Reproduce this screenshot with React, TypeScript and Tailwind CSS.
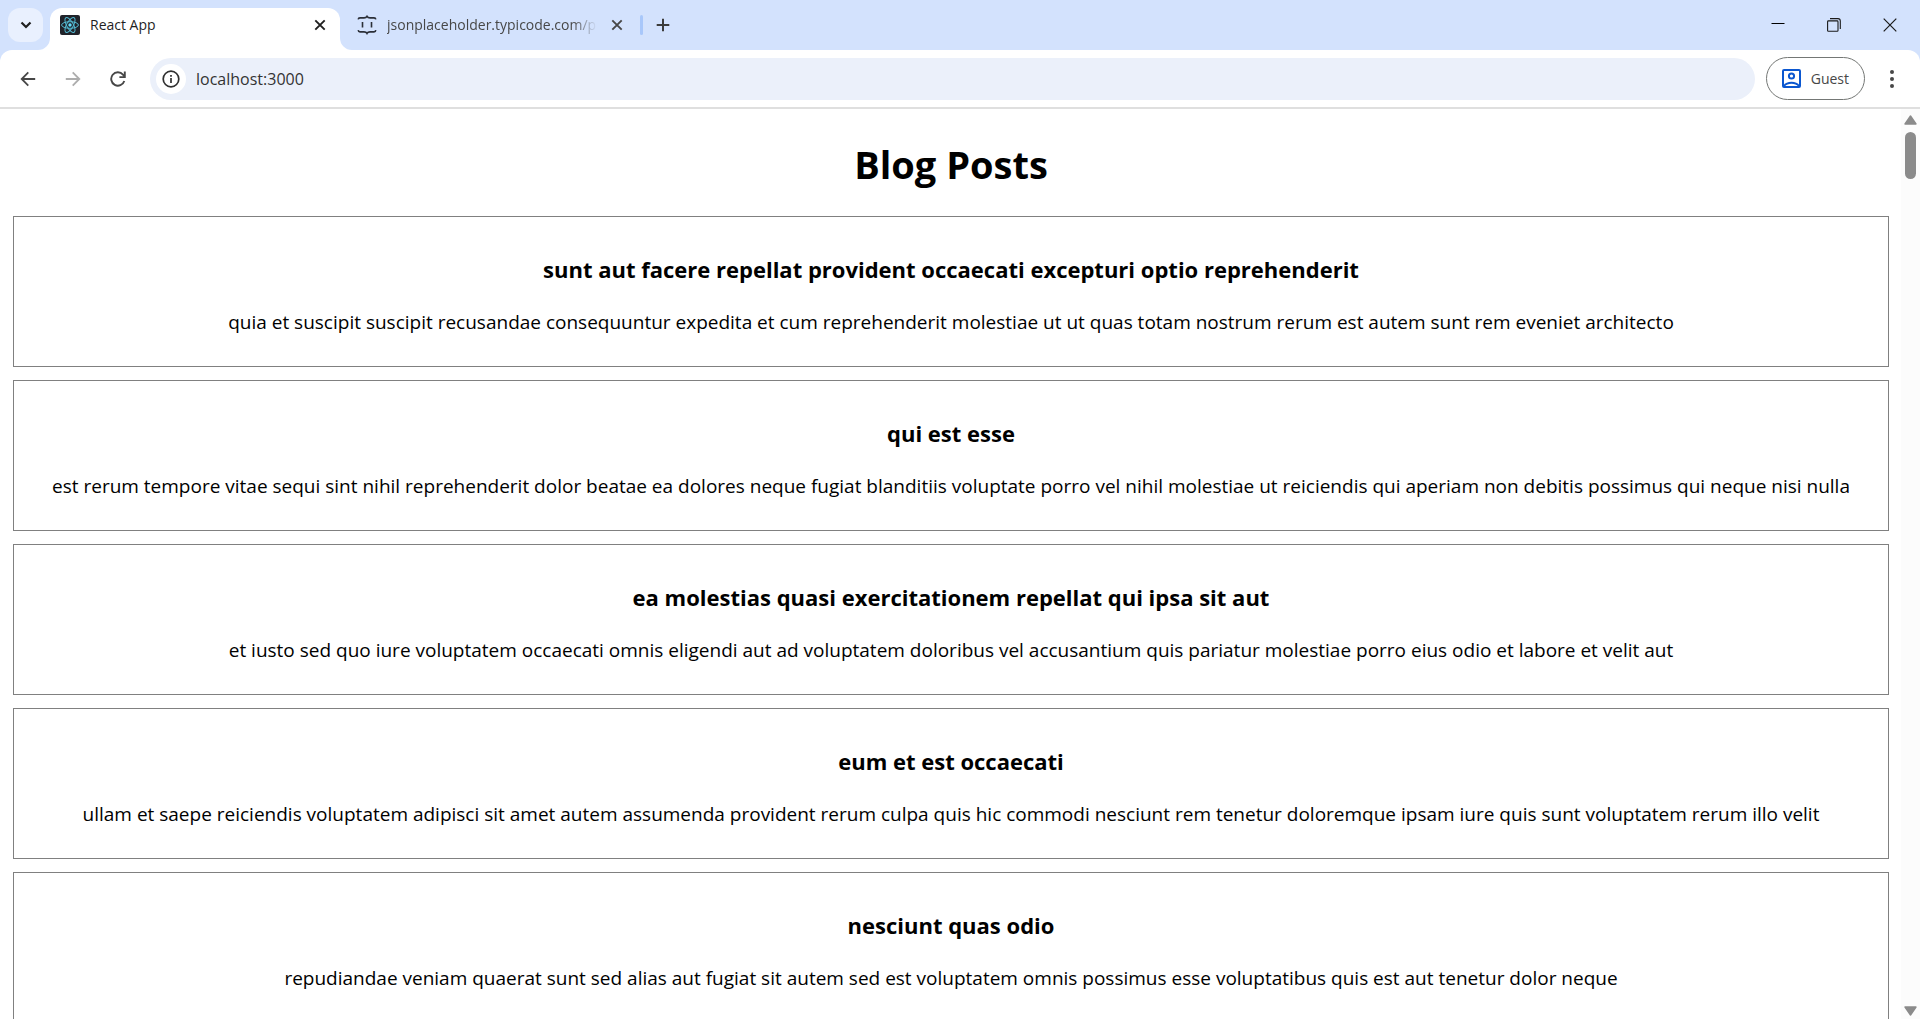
import React from "react";

const posts = [
  {
    id: 1,
    title: "sunt aut facere repellat provident occaecati excepturi optio reprehenderit",
    body: "quia et suscipit suscipit recusandae consequuntur expedita et cum reprehenderit molestiae ut ut quas totam nostrum rerum est autem sunt rem eveniet architecto",
  },
  {
    id: 2,
    title: "qui est esse",
    body: "est rerum tempore vitae sequi sint nihil reprehenderit dolor beatae ea dolores neque fugiat blanditiis voluptate porro vel nihil molestiae ut reiciendis qui aperiam non debitis possimus qui neque nisi nulla",
  },
  {
    id: 3,
    title: "ea molestias quasi exercitationem repellat qui ipsa sit aut",
    body: "et iusto sed quo iure voluptatem occaecati omnis eligendi aut ad voluptatem doloribus vel accusantium quis pariatur molestiae porro eius odio et labore et velit aut",
  },
  {
    id: 4,
    title: "eum et est occaecati",
    body: "ullam et saepe reiciendis voluptatem adipisci sit amet autem assumenda provident rerum culpa quis hic commodi nesciunt rem tenetur doloremque ipsam iure quis sunt voluptatem rerum illo velit",
  },
  {
    id: 5,
    title: "nesciunt quas odio",
    body: "repudiandae veniam quaerat sunt sed alias aut fugiat sit autem sed est voluptatem omnis possimus esse voluptatibus quis est aut tenetur dolor neque",
  },
];

function ReactLogo() {
  return (
    <svg width="20" height="20" viewBox="0 0 20 20" fill="none" aria-hidden="true">
      <rect width="20" height="20" rx="2" fill="#20232a" />
      <g stroke="#53b9d1" strokeWidth="1">
        <ellipse cx="10" cy="10" rx="8.4" ry="3.3" />
        <ellipse cx="10" cy="10" rx="8.4" ry="3.3" transform="rotate(60 10 10)" />
        <ellipse cx="10" cy="10" rx="8.4" ry="3.3" transform="rotate(120 10 10)" />
      </g>
      <circle cx="10" cy="10" r="1.7" fill="#61dafb" />
    </svg>
  );
}

function BracesLogo() {
  return (
    <svg width="20" height="20" viewBox="0 0 20 20" fill="none" stroke="#2b2f38" strokeWidth="1.6" aria-hidden="true">
      <path d="M1.2 4.4Q1.4 2.9 3 2.9H7Q9.2 2.9 10 1.4Q10.8 2.9 13 2.9H17Q18.6 2.9 18.8 4.4" />
      <path d="M1.2 15.2Q1.4 16.9 3 16.9H7Q9.2 16.9 10 18.4Q10.8 16.9 13 16.9H17Q18.6 16.9 18.8 15.2" />
      <path d="M5.5 7V12.4M14.5 7V12.4" />
    </svg>
  );
}

function CloseGlyph() {
  return (
    <svg width="12" height="12" viewBox="0 0 12 12" stroke="currentColor" strokeWidth="1.9" aria-hidden="true">
      <path d="M1.3 1.3L10.7 10.7M10.7 1.3L1.3 10.7" />
    </svg>
  );
}

function TabStrip() {
  return (
    <header className="flex h-[50px] shrink-0 bg-[#d3e2fd] pl-2">
      <button aria-label="Search tabs" className="mt-2 flex h-[34px] w-[35px] items-center justify-center rounded-xl bg-[#e9f0fe] text-[#1f1f1f]">
        <svg width="12" height="8" viewBox="0 0 12 8" fill="none" stroke="currentColor" strokeWidth="2.2" aria-hidden="true">
          <path d="M1.5 1.5L6 6L10.5 1.5" />
        </svg>
      </button>
      <div className="relative mt-2 ml-[7px] flex h-[42px] w-[290px] items-center rounded-t-xl bg-white pr-3 pb-2 pl-2.5">
        <svg className="absolute bottom-0 -left-3 text-white" width="12" height="12" viewBox="0 0 12 12" fill="currentColor" aria-hidden="true">
          <path d="M12 0V12H0A12 12 0 0 0 12 0Z" />
        </svg>
        <svg className="absolute -right-3 bottom-0 text-white" width="12" height="12" viewBox="0 0 12 12" fill="currentColor" aria-hidden="true">
          <path d="M0 0V12H12A12 12 0 0 1 0 0Z" />
        </svg>
        <ReactLogo />
        <span className="ml-2.5 flex-1 text-sm text-[#1f1f1f]">React App</span>
        <button aria-label="Close React App" className="flex h-5 w-4 items-center justify-center text-[#1f1f1f]">
          <CloseGlyph />
        </button>
      </div>
      <div className="mt-2 ml-[17px] flex h-[34px] items-center">
        <BracesLogo />
        <span className="ml-2.5 w-[210px] text-sm whitespace-nowrap text-[#474747] [mask-image:linear-gradient(to_right,black_88%,transparent)]">
          jsonplaceholder.typicode.com/p
        </span>
        <button aria-label="Close jsonplaceholder" className="ml-3 flex h-5 w-4 items-center justify-center text-[#474747]">
          <CloseGlyph />
        </button>
      </div>
      <div className="mt-[15px] ml-[15px] h-5 w-[3px] rounded-full bg-[#a8c7fa]" />
      <button aria-label="New tab" className="mt-2 ml-2.5 flex h-[34px] w-5 items-center justify-center text-[#3c3c3c]">
        <svg width="14" height="14" viewBox="0 0 14 14" stroke="currentColor" strokeWidth="2" aria-hidden="true">
          <path d="M7 0.7V13.3M0.7 7H13.3" />
        </svg>
      </button>
      <div className="mr-0.5 ml-auto flex h-[49px]">
        <button aria-label="Minimize" className="flex w-14 items-center justify-center">
          <svg width="14" height="14" viewBox="0 0 14 14" stroke="#000" aria-hidden="true">
            <path d="M0.5 5.5H13.5" />
          </svg>
        </button>
        <button aria-label="Restore" className="flex w-14 items-center justify-center">
          <svg width="14" height="14" viewBox="0 0 14 14" fill="none" stroke="#1a1a1a" strokeWidth="1.1" aria-hidden="true">
            <rect x="0.6" y="2.9" width="10.4" height="10.4" rx="0.8" />
            <path d="M3 0.6H11Q13.3 0.6 13.3 3V11" />
          </svg>
        </button>
        <button aria-label="Close window" className="flex w-14 items-center justify-center">
          <svg width="14" height="14" viewBox="0 0 14 14" stroke="#1a1a1a" strokeWidth="1.2" aria-hidden="true">
            <path d="M0.7 0.7L13.3 13.3M13.3 0.7L0.7 13.3" />
          </svg>
        </button>
      </div>
    </header>
  );
}

function Toolbar() {
  return (
    <div className="shrink-0 bg-[#d3e2fd]">
      <div className="flex h-[59px] items-center rounded-t-xl border-b-2 border-[#dfdfdf] bg-white pr-2.5 pl-[5px]">
        <button aria-label="Back" className="flex h-9 w-[45px] items-center justify-center text-[#474747]">
          <svg width="16" height="16" viewBox="0 0 16 16" fill="none" stroke="currentColor" strokeWidth="1.8" aria-hidden="true">
            <path d="M15.2 8H2M8.3 1.4L1.7 8L8.3 14.6" />
          </svg>
        </button>
        <button aria-label="Forward" className="flex h-9 w-[45px] items-center justify-center text-[#adadad]">
          <svg width="16" height="16" viewBox="0 0 16 16" fill="none" stroke="currentColor" strokeWidth="1.8" aria-hidden="true">
            <path d="M0.8 8H14M7.7 1.4L14.3 8L7.7 14.6" />
          </svg>
        </button>
        <button aria-label="Reload" className="flex h-9 w-[45px] items-center justify-center text-[#474747]">
          <svg width="16" height="16" viewBox="0 0 16 16" fill="none" stroke="currentColor" strokeWidth="1.9" aria-hidden="true">
            <path d="M14.3 10A6.7 6.7 0 1 1 13 3.6L14.6 5.6" />
            <path d="M9.4 6.1H14.8V0.5" />
          </svg>
        </button>
        <div className="ml-2.5 flex h-[42px] flex-1 items-center rounded-full bg-[#ebf0fa] pl-1.5">
          <button aria-label="View site information" className="flex size-[30px] items-center justify-center rounded-full bg-white text-[#303030]">
            <svg width="18" height="18" viewBox="0 0 18 18" fill="none" stroke="currentColor" strokeWidth="1.7" aria-hidden="true">
              <circle cx="9" cy="9" r="7.8" />
              <path d="M9 8V13M9 5V6.8" />
            </svg>
          </button>
          <input aria-label="Address" defaultValue="localhost:3000" className="ml-2.5 flex-1 bg-transparent text-base text-[#333333] outline-none" />
        </div>
        <button className="ml-[11px] flex h-[43px] items-center gap-2.5 rounded-full border border-[#747775] pr-[15px] pl-[15px] text-sm text-[#474747]">
          <svg width="19" height="19" viewBox="0 0 19 19" fill="none" stroke="#0b57d0" strokeWidth="2" aria-hidden="true">
            <rect x="1" y="1" width="17" height="17" rx="1" />
            <circle cx="9.5" cy="7" r="2.6" />
            <path d="M2 17Q4.5 13.8 9.5 13.8Q14.5 13.8 17 17" />
          </svg>
          Guest
        </button>
        <button aria-label="Menu" className="ml-[9px] flex h-9 w-9 items-center justify-center text-[#474747]">
          <svg width="4" height="18" viewBox="0 0 4 18" fill="currentColor" aria-hidden="true">
            <circle cx="2" cy="2" r="2" />
            <circle cx="2" cy="9" r="2" />
            <circle cx="2" cy="16" r="2" />
          </svg>
        </button>
      </div>
    </div>
  );
}

function Scrollbar() {
  return (
    <div className="flex w-[19px] shrink-0 flex-col items-center bg-[#fcfcfc] pt-1.5 pb-[3px] text-[#8b8b8b]">
      <svg width="13" height="10" viewBox="0 0 13 10" fill="currentColor" stroke="currentColor" strokeWidth="1.4" strokeLinejoin="round" aria-hidden="true">
        <path d="M6.5 1L12 9H1Z" />
      </svg>
      <div className="mt-[7px] h-[47px] w-[11px] rounded-full bg-[#8b8b8b]" />
      <svg className="mt-auto" width="13" height="10" viewBox="0 0 13 10" fill="currentColor" stroke="currentColor" strokeWidth="1.4" strokeLinejoin="round" aria-hidden="true">
        <path d="M6.5 9L12 1H1Z" />
      </svg>
    </div>
  );
}

export default function App() {
  return (
    <div className="flex h-screen flex-col overflow-hidden bg-white font-['Open_Sans','Noto_Sans',sans-serif]">
      <TabStrip />
      <Toolbar />
      <div className="flex min-h-0 flex-1">
        <main className="min-w-0 flex-1 overflow-hidden pr-3 pl-[13px] text-center text-black">
          <h1 className="pt-[29px] pb-[26px] text-[38px] leading-[52px] font-bold">Blog Posts</h1>
          <div className="flex flex-col gap-[13px]">
            {posts.map((post) => (
              <article key={post.id} className="border border-[#808080] px-3 pt-[37px] pb-[30px]">
                <h3 className="text-[22px] leading-[30px] font-bold">{post.title}</h3>
                <p className="mt-6 text-[19px] leading-7">{post.body}</p>
              </article>
            ))}
          </div>
        </main>
        <Scrollbar />
      </div>
    </div>
  );
}
